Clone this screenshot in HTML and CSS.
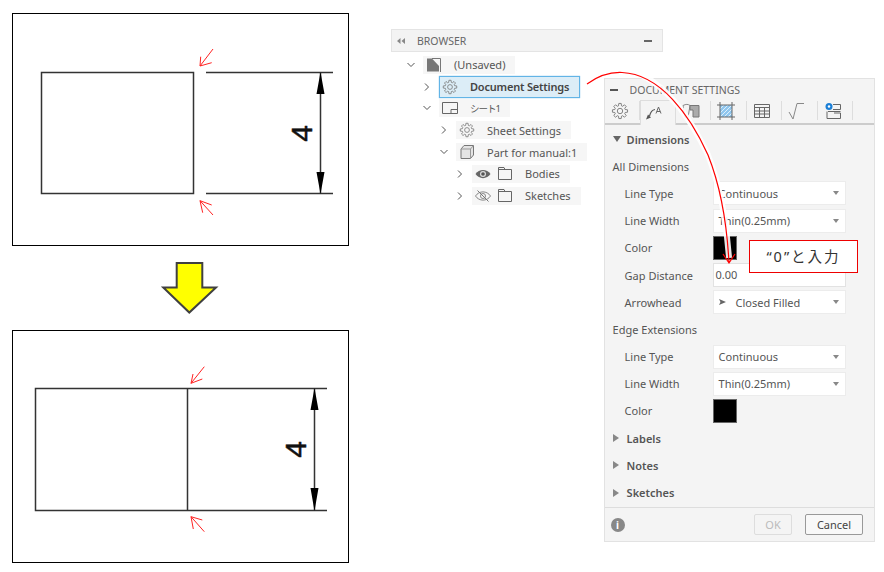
FILE: index.html
```html
<!DOCTYPE html>
<html>
  <head>
    <title>Document Settings</title>
    <meta charset="utf-8" />
    <link rel="stylesheet" href="styles.css">
  </head>
  <body>
    <svg class="icon-defs" width="0" height="0">
      <symbol id="gear" viewBox="-10 -10 20 20">
        <path d="M5.77-1.65 8.4-1.33V1.33L5.77 1.65 5.25 2.91 6.88 5 5 6.88 2.91 5.25 1.65 5.77 1.33 8.4H-1.33L-1.65 5.77-2.91 5.25-5 6.88-6.88 5-5.25 2.91-5.77 1.65-8.4 1.33V-1.33L-5.77-1.65-5.25-2.91-6.88-5-5-6.88-2.91-5.25-1.65-5.77-1.33-8.4H1.33L1.65-5.77 2.91-5.25 5-6.88 6.88-5 5.25-2.91Z" fill="none" stroke="#777" stroke-width="1" stroke-linejoin="round"/>
        <circle r="3" fill="none" stroke="#777"/>
      </symbol>
      <symbol id="folder" viewBox="0 0 14 13">
        <path d="M.5 12.5V.5H6L7 2.5H13.5V12.5ZM.5 2.5H7" fill="none" stroke="#666"/>
      </symbol>
      <symbol id="caret" viewBox="0 0 8 6">
        <path d="M1 1H7L4 5Z" fill="#888"/>
      </symbol>
    </svg>

    <div class="page">
      <div class="drawings">
        <div class="frame">
          <svg class="sketch" viewBox="13 14 335 231">
            <g class="part">
              <rect x="41.5" y="72.5" width="152" height="121"/>
              <path d="M206 72.5H333M206 193.5H333M320.5 72.5V193.5"/>
            </g>
            <path class="head" d="M320.5 72 324.5 94H316.5ZM320.5 194 324.5 172H316.5Z"/>
            <text class="dim-text" transform="translate(312 133.5) rotate(-90)">4</text>
            <g class="pointer">
              <path d="M213 49 200 66M200.7 56.7 200 66 211.7 62.7"/>
              <path d="M213 215 200 200.7M202.7 212.7 200 200.7 211.7 205"/>
            </g>
          </svg>
        </div>
        <svg class="down-arrow" viewBox="0 0 337 54">
          <path d="M164.7 1H190.3V25.5H204L177.3 50.5 151.3 25.5H164.7Z"/>
        </svg>
        <div class="frame">
          <svg class="sketch" viewBox="13 331 335 231">
            <g class="part">
              <path d="M327 388.5H35.5V510.5H327M187.5 388.5V510.5M314.5 388.5V510.5"/>
            </g>
            <path class="head" d="M314.5 388 318.5 410H310.5ZM314.5 511 318.5 488H310.5Z"/>
            <text class="dim-text" transform="translate(306 449.5) rotate(-90)">4</text>
            <g class="pointer">
              <path d="M204.3 366.7 191 383.3M193 374 191 383.3 202.3 379"/>
              <path d="M204.3 531.7 191 516.7M193.3 529 191 516.7 202.3 520"/>
            </g>
          </svg>
        </div>
      </div>

      <div class="workspace">
        <div class="browser-bar">
          <svg class="collapse" viewBox="0 0 8 6"><path d="M3.500 0V6L0 3ZM8 0V6L4.500 3Z" fill="#888"/></svg>
          <span class="browser-title">BROWSER</span>
          <span class="bar-minus"></span>
        </div>
        <div class="lower">
          <div class="tree">
            <div class="tree-row">
              <svg class="chev" viewBox="0 0 10 10"><path d="M1.5 3 5 6.5 8.5 3"/></svg>
              <div class="pill">
                <svg class="tree-icon" viewBox="0 0 16 16"><path d="M1 1.500H6L13 9V14.500H1Z" fill="#777"/><path d="M6 1.500H14.500V15" fill="none" stroke="#777"/></svg>
                <span>(Unsaved)</span>
              </div>
            </div>
            <div class="tree-row lvl-1">
              <svg class="chev" viewBox="0 0 10 10"><path d="M3 1.500 6.500 5 3 8.500"/></svg>
              <div class="pill pill-active">
                <svg class="tree-icon"><use href="#gear"/></svg>
                <span>Document Settings</span>
              </div>
            </div>
            <div class="tree-row lvl-1">
              <svg class="chev" viewBox="0 0 10 10"><path d="M1.5 3 5 6.500 8.5 3"/></svg>
              <div class="pill">
                <svg class="tree-icon" viewBox="0 0 16 16"><path d="M.5 2.500H15.500V13.500H.5ZM9 13.500V9.500H15.500" fill="none" stroke="#666"/></svg>
                <span class="sheet-name">シート1</span>
              </div>
            </div>
            <div class="tree-row lvl-2">
              <svg class="chev" viewBox="0 0 10 10"><path d="M3 1.500 6.500 5 3 8.500"/></svg>
              <div class="pill">
                <svg class="tree-icon"><use href="#gear"/></svg>
                <span>Sheet Settings</span>
              </div>
            </div>
            <div class="tree-row lvl-2">
              <svg class="chev" viewBox="0 0 10 10"><path d="M1.5 3 5 6.500 8.5 3"/></svg>
              <div class="pill">
                <svg class="tree-icon" viewBox="0 0 16 16"><path d="M5 1.500H14.500V11L11.500 14.500H2V5Z" fill="#e4e4e4" stroke="#777"/><path d="M11.500 5V14.500M2 5H11.500L14.500 1.500" fill="none" stroke="#999"/></svg>
                <span>Part for manual:1</span>
              </div>
            </div>
            <div class="tree-row lvl-3">
              <svg class="chev" viewBox="0 0 10 10"><path d="M3 1.500 6.500 5 3 8.500"/></svg>
              <div class="pill">
                <svg class="tree-icon" viewBox="0 0 16 16"><path d="M.5 8C4 2.500 12 2.500 15.500 8 12 13.500 4 13.500 .5 8Z" fill="#666"/><circle cx="8" cy="8" r="3" fill="#ddd"/><circle cx="8" cy="8" r="1.800" fill="#555"/></svg>
                <svg class="folder-icon"><use href="#folder"/></svg>
                <span>Bodies</span>
              </div>
            </div>
            <div class="tree-row lvl-3">
              <svg class="chev" viewBox="0 0 10 10"><path d="M3 1.500 6.500 5 3 8.500"/></svg>
              <div class="pill">
                <svg class="tree-icon" viewBox="0 0 16 16"><path d="M.5 8C4 2.500 12 2.500 15.500 8 12 13.500 4 13.500 .5 8Z" fill="none" stroke="#888"/><circle cx="8" cy="8" r="2.500" fill="none" stroke="#888"/><path d="M2.500 2.500 13.500 13.500" stroke="#777"/></svg>
                <svg class="folder-icon"><use href="#folder"/></svg>
                <span>Sketches</span>
              </div>
            </div>
          </div>

          <div class="settings">
            <div class="settings-title">
              <span class="title-minus"></span>
              <span>DOCUMENT SETTINGS</span>
            </div>
            <div class="tabs">
              <div class="tab"><svg class="tab-icon"><use href="#gear"/></svg></div>
              <div class="tab tab-active">
                <svg class="tab-icon" viewBox="0 0 18 18"><path d="M0 15.500 2 10.500 5 13.500Z" fill="#555"/><path d="M3.500 12C4.500 8 6 6 9 5.500" fill="none" stroke="#555" stroke-width="1.200"/><path d="M10 9.500 12.500 3 15 9.500M11 7.500H14" fill="none" stroke="#666"/></svg>
              </div>
              <div class="tab">
                <svg class="tab-icon" viewBox="0 0 18 18"><path d="M1 3.500C4 2 6 2 8 3.500L6 15.500H3Z" fill="none" stroke="#888"/><path d="M8 3.500H17V15H11V8H8Z" fill="#aaa" stroke="#777"/></svg>
              </div>
              <div class="tab">
                <svg class="tab-icon" viewBox="0 0 18 18"><rect x="3" y="3" width="12" height="12" fill="#8fc6ee"/><path d="M3 7 7 3M3 11 11 3M3 15 15 3M7 15 15 7M11 15 15 11" stroke="#fff" stroke-width=".7"/><path d="M3 0V18M15 0V18M0 3H18M0 15H18" stroke="#666"/></svg>
              </div>
              <div class="tab">
                <svg class="tab-icon" viewBox="0 0 18 18"><path d="M1.500 2.500H16.500V15.500H1.500ZM1.500 5.500H16.500M1.500 9H16.500M1.500 12H16.500M6.500 5.500V15.500M11.500 5.500V15.500" fill="none" stroke="#666"/></svg>
              </div>
              <div class="tab">
                <svg class="tab-icon" viewBox="0 0 18 18"><path d="M1 10 5 17 9 1.500H16" fill="none" stroke="#888"/></svg>
              </div>
              <div class="tab">
                <svg class="tab-icon" viewBox="0 0 18 18"><circle cx="5" cy="4.500" r="3.500" fill="#1b7fd6"/><circle cx="5" cy="4.500" r="1.200" fill="#fff"/><path d="M9 2.500H16.500V7.500H9M4 9.500H16.500M3 9.500V16.500H16.500V11H10" fill="none" stroke="#666"/></svg>
              </div>
            </div>
            <div class="settings-body">
              <div class="row section">
                <span class="tri tri-open"></span>
                <span>Dimensions</span>
              </div>
              <div class="row group-label">All Dimensions</div>
              <div class="row field">
                <span class="field-label">Line Type</span>
                <div class="select"><span>Continuous</span><svg class="caret"><use href="#caret"/></svg></div>
              </div>
              <div class="row field">
                <span class="field-label">Line Width</span>
                <div class="select"><span>Thin(0.25mm)</span><svg class="caret"><use href="#caret"/></svg></div>
              </div>
              <div class="row field">
                <span class="field-label">Color</span>
                <div class="swatch"></div>
              </div>
              <div class="row field">
                <span class="field-label">Gap Distance</span>
                <div class="input">0.00</div>
              </div>
              <div class="row field">
                <span class="field-label">Arrowhead</span>
                <div class="select">
                  <svg class="head-icon" viewBox="0 0 8 8"><path d="M0 1 7 4 0 7 1.500 4Z" fill="#666"/></svg>
                  <span>Closed Filled</span>
                  <svg class="caret"><use href="#caret"/></svg>
                </div>
              </div>
              <div class="row group-label">Edge Extensions</div>
              <div class="row field">
                <span class="field-label">Line Type</span>
                <div class="select"><span>Continuous</span><svg class="caret"><use href="#caret"/></svg></div>
              </div>
              <div class="row field">
                <span class="field-label">Line Width</span>
                <div class="select"><span>Thin(0.25mm)</span><svg class="caret"><use href="#caret"/></svg></div>
              </div>
              <div class="row field">
                <span class="field-label">Color</span>
                <div class="swatch"></div>
              </div>
              <div class="row section">
                <span class="tri"></span>
                <span>Labels</span>
              </div>
              <div class="row section">
                <span class="tri"></span>
                <span>Notes</span>
              </div>
              <div class="row section">
                <span class="tri"></span>
                <span>Sketches</span>
              </div>
            </div>
            <div class="settings-footer">
              <span class="info">i</span>
              <button class="btn btn-off">OK</button>
              <button class="btn">Cancel</button>
            </div>
          </div>
        </div>
      </div>

      <!-- callout drawn over the dialog -->
      <svg class="curve" viewBox="0 0 884 572">
        <path class="curve-halo" d="M640 74C672 90 692 122 708 155 720 185 727 225 729 258"/>
        <path class="curve-line" d="M587 84C598 76 610 72 622 72.500 660 74 690 115 708 155 720 185 727 225 729 263M723 254 729 263 735 254"/>
      </svg>
      <div class="note">“0”と入力</div>
    </div>
  </body>
</html>
```

FILE: styles.css
```css
html, body {
  margin: 0;
  background: #fff;
}
.icon-defs {
  position: absolute;
}
.page {
  position: relative;
  display: flex;
  width: 884px;
  height: 572px;
  overflow: hidden;
  font-family: "Noto Sans", "Noto Sans CJK JP", sans-serif;
  font-size: 11px;
  color: #555;
}

/* left column, the two drawings */
.drawings {
  width: 337px;
  margin: 13px 42px 0 12px;
}
.frame {
  box-sizing: border-box;
  width: 337px;
  height: 233px;
  border: 1px solid #000;
}
.sketch {
  display: block;
  width: 335px;
  height: 231px;
}
.part {
  fill: none;
  stroke: #333;
  stroke-width: 1.5;
}
.head {
  fill: #000;
}
.dim-text {
  font-family: "Liberation Sans", sans-serif;
  font-size: 30px;
  text-anchor: middle;
  fill: #111;
  stroke: #111;
  stroke-width: .5;
}
.pointer {
  fill: none;
  stroke: #f22;
  stroke-width: 1;
}
.down-arrow {
  display: block;
  width: 337px;
  height: 54px;
  margin: 16px 0 14px;
}
.down-arrow path {
  fill: #ff0;
  stroke: #404040;
  stroke-width: 2;
}

/* browser tree */
.workspace {
  padding-top: 29px;
  width: 484px;
}
.browser-bar {
  box-sizing: border-box;
  display: flex;
  align-items: center;
  width: 272px;
  height: 23px;
  padding-left: 5px;
  background: #f3f3f3;
  border: 1px solid #e4e4e4;
}
.collapse {
  width: 8px;
  height: 6px;
  margin-right: 12px;
}
.browser-title {
  flex: 1;
  font-size: 10.5px;
  color: #666;
}
.bar-minus {
  width: 8px;
  height: 2px;
  margin-right: 10px;
  background: #666;
}
.lower {
  display: flex;
}
.tree {
  width: 213px;
  padding: 2px 0 0 12px;
  box-sizing: border-box;
}
.tree-row {
  display: flex;
  align-items: center;
  height: 21.8px;
}
.lvl-1 {
  margin-left: 16px;
}
.lvl-2 {
  margin-left: 33px;
}
.lvl-3 {
  margin-left: 49px;
}
.chev {
  width: 10px;
  height: 10px;
  margin: 0 7px 0 3px;
  fill: none;
  stroke: #555;
}
.pill {
  display: flex;
  align-items: center;
  height: 18px;
  padding: 0 10px 0 3px;
  background: #f6f6f6;
  white-space: nowrap;
}
.pill-active {
  height: 20px;
  padding-left: 2px;
  background: #dcedf7;
  border: 1px solid #62b4e6;
  box-shadow: 0 0 1px #62b4e6;
  font-weight: 600;
  letter-spacing: -.2px;
  color: #444;
}
.sheet-name {
  font-size: 9.5px;
  letter-spacing: -1px;
}
.tree-icon {
  width: 16px;
  height: 16px;
  margin-right: 12px;
  flex: none;
}
.folder-icon {
  width: 14px;
  height: 13px;
  margin: 0 13px 0 -4px;
  flex: none;
}
.tree-row:nth-child(n+6) .tree-icon {
  margin-right: 11px;
}

/* settings dialog */
.settings {
  box-sizing: border-box;
  width: 272px;
  height: 464px;
  margin-top: 26px;
  background: #f4f4f4;
  border: 1px solid #e2e2e2;
}
.settings-title {
  display: flex;
  align-items: center;
  height: 21px;
  font-size: 10.5px;
  color: #666;
}
.title-minus {
  width: 8px;
  height: 2px;
  margin: 0 12px 0 5px;
  background: #555;
}
.tabs {
  display: flex;
  height: 25px;
  box-sizing: border-box;
  border-bottom: 2px solid #ccc;
}
.tab {
  box-sizing: border-box;
  display: flex;
  align-items: center;
  width: 35.5px;
  margin: 1px 0 3px;
  padding-left: 6px;
  border-right: 1px solid #ddd;
}
.tab-active {
  height: 25px;
  margin: 0;
  padding-left: 5px;
  background: #f4f4f4;
  border: 1px solid #ddd;
  border-bottom: 0;
}
.tab-icon {
  width: 18px;
  height: 18px;
}
.settings-body {
  padding-top: .5px;
  height: 381.5px;
  border-bottom: 1px solid #ddd;
}
.row {
  display: flex;
  align-items: center;
  height: 27.2px;
}
.section {
  padding-left: 8px;
  font-weight: 600;
  color: #555;
}
.tri {
  width: 0;
  height: 0;
  margin-right: 8px;
  border-style: solid;
  border-width: 4px 0 4px 6px;
  border-color: transparent transparent transparent #888;
}
.tri-open {
  margin-right: 6px;
  border-width: 6px 4.5px 0;
  border-color: #666 transparent transparent;
}
.group-label {
  padding-left: 8px;
}
.field {
  padding-left: 20px;
}
.field-label {
  width: 88px;
}
.select {
  box-sizing: border-box;
  display: flex;
  align-items: center;
  width: 133px;
  height: 24px;
  padding: 0 5px 0 5px;
  background: #fff;
  border: 1px solid #ececec;
}
.select span {
  flex: 1;
}
.caret {
  width: 8px;
  height: 6px;
}
.head-icon {
  width: 8px;
  height: 8px;
  margin-right: 9px;
}
.swatch {
  box-sizing: border-box;
  width: 24px;
  height: 24px;
  background: #000;
  border: 1px solid #666;
}
.input {
  box-sizing: border-box;
  width: 133px;
  height: 24px;
  padding: 0 2px;
  line-height: 22px;
  background: #fff;
  border: 1px solid #e2e2e2;
}
.settings-footer {
  display: flex;
  align-items: center;
  height: 33px;
  padding: 0 11px 0 6px;
}
.info {
  width: 14px;
  height: 14px;
  margin-right: auto;
  border-radius: 50%;
  background: #888;
  color: #fff;
  font-size: 10px;
  font-weight: 700;
  line-height: 14px;
  text-align: center;
}
.btn {
  box-sizing: border-box;
  width: 58px;
  height: 21px;
  padding: 0;
  background: #f8f8f8;
  border: 1px solid #999;
  border-radius: 2px;
  font: inherit;
  color: #444;
}
.btn-off {
  width: 38px;
  margin-right: 13px;
  background: #f4f4f4;
  border-color: #ddd;
  color: #bbb;
}

/* red annotation on top of everything */
.curve {
  position: absolute;
  left: 0;
  top: 0;
  width: 884px;
  height: 572px;
  fill: none;
}
.curve-halo {
  stroke: #fff;
  stroke-width: 6;
  opacity: .9;
}
.curve-line {
  stroke: #f00;
  stroke-width: 1.2;
}
.note {
  position: absolute;
  left: 749px;
  top: 240px;
  box-sizing: border-box;
  width: 109px;
  height: 33px;
  border: 1px solid #e00;
  background: #fff;
  color: #333;
  font-size: 14.5px;
  letter-spacing: 2px;
  line-height: 30px;
  text-align: center;
}
```
